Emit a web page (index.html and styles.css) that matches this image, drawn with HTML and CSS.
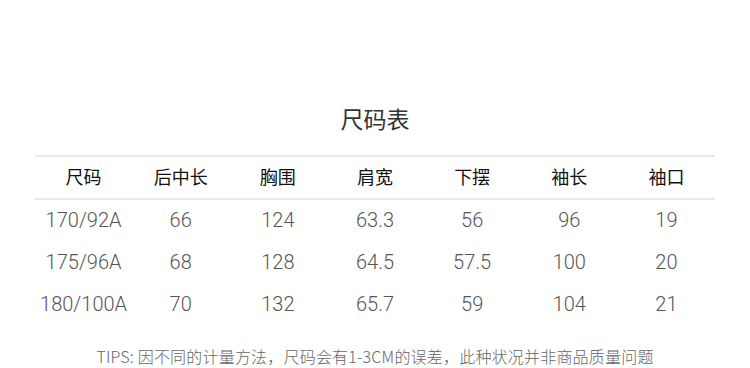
FILE: index.html
```html
<!DOCTYPE html>
<html lang="zh">
<head>
<meta charset="utf-8">
<link rel="stylesheet" href="styles.css">
</head>
<body>
<div class="page">
  <h1 class="title">尺码表</h1>
  <table class="size-table">
    <thead>
      <tr><th>尺码</th><th>后中长</th><th>胸围</th><th>肩宽</th><th>下摆</th><th>袖长</th><th>袖口</th></tr>
    </thead>
    <tbody>
      <tr><td>170/92A</td><td>66</td><td>124</td><td>63.3</td><td>56</td><td>96</td><td>19</td></tr>
      <tr><td>175/96A</td><td>68</td><td>128</td><td>64.5</td><td>57.5</td><td>100</td><td>20</td></tr>
      <tr><td>180/100A</td><td>70</td><td>132</td><td>65.7</td><td>59</td><td>104</td><td>21</td></tr>
    </tbody>
  </table>
  <p class="tips">TIPS: 因不同的计量方法，尺码会有1-3CM的误差，此种状况并非商品质量问题</p>
</div>
</body>
</html>
```
FILE: styles.css
```css
html, body {
  margin: 0;
  padding: 0;
  background: #fff;
}
.page {
  width: 680px;
  margin: 0 0 0 35px;
  padding-top: 100px;
  font-family: "Liberation Sans", "Noto Sans CJK SC", sans-serif;
}
.title {
  margin: 0;
  height: 36px;
  line-height: 36px;
  text-align: center;
  font-family: "Noto Sans CJK SC", sans-serif;
  font-weight: 400;
  font-size: 23px;
  color: #333;
}
.size-table {
  margin-top: 19px;
  width: 680px;
  border-collapse: collapse;
  table-layout: fixed;
}
.size-table th {
  height: 37px;
  padding: 0 0 4px;
  font-family: "Noto Sans CJK SC", sans-serif;
  font-weight: 400;
  font-size: 18px;
  color: #111;
  border-top: 2px solid #e9e9e9;
  border-bottom: 2px solid #e9e9e9;
  text-align: center;
}
.size-table td {
  height: 39px;
  padding: 0 0 3px;
  text-align: center;
  font-family: "Roboto", "Liberation Sans", sans-serif;
  font-weight: 300;
  font-size: 20px;
  color: #555;
}
.tips {
  margin: 19px 0 0;
  text-align: center;
  font-family: "Noto Sans CJK SC", sans-serif;
  font-weight: 300;
  font-size: 16px;
  line-height: 22px;
  letter-spacing: 0.2px;
  color: #666;
}
```
